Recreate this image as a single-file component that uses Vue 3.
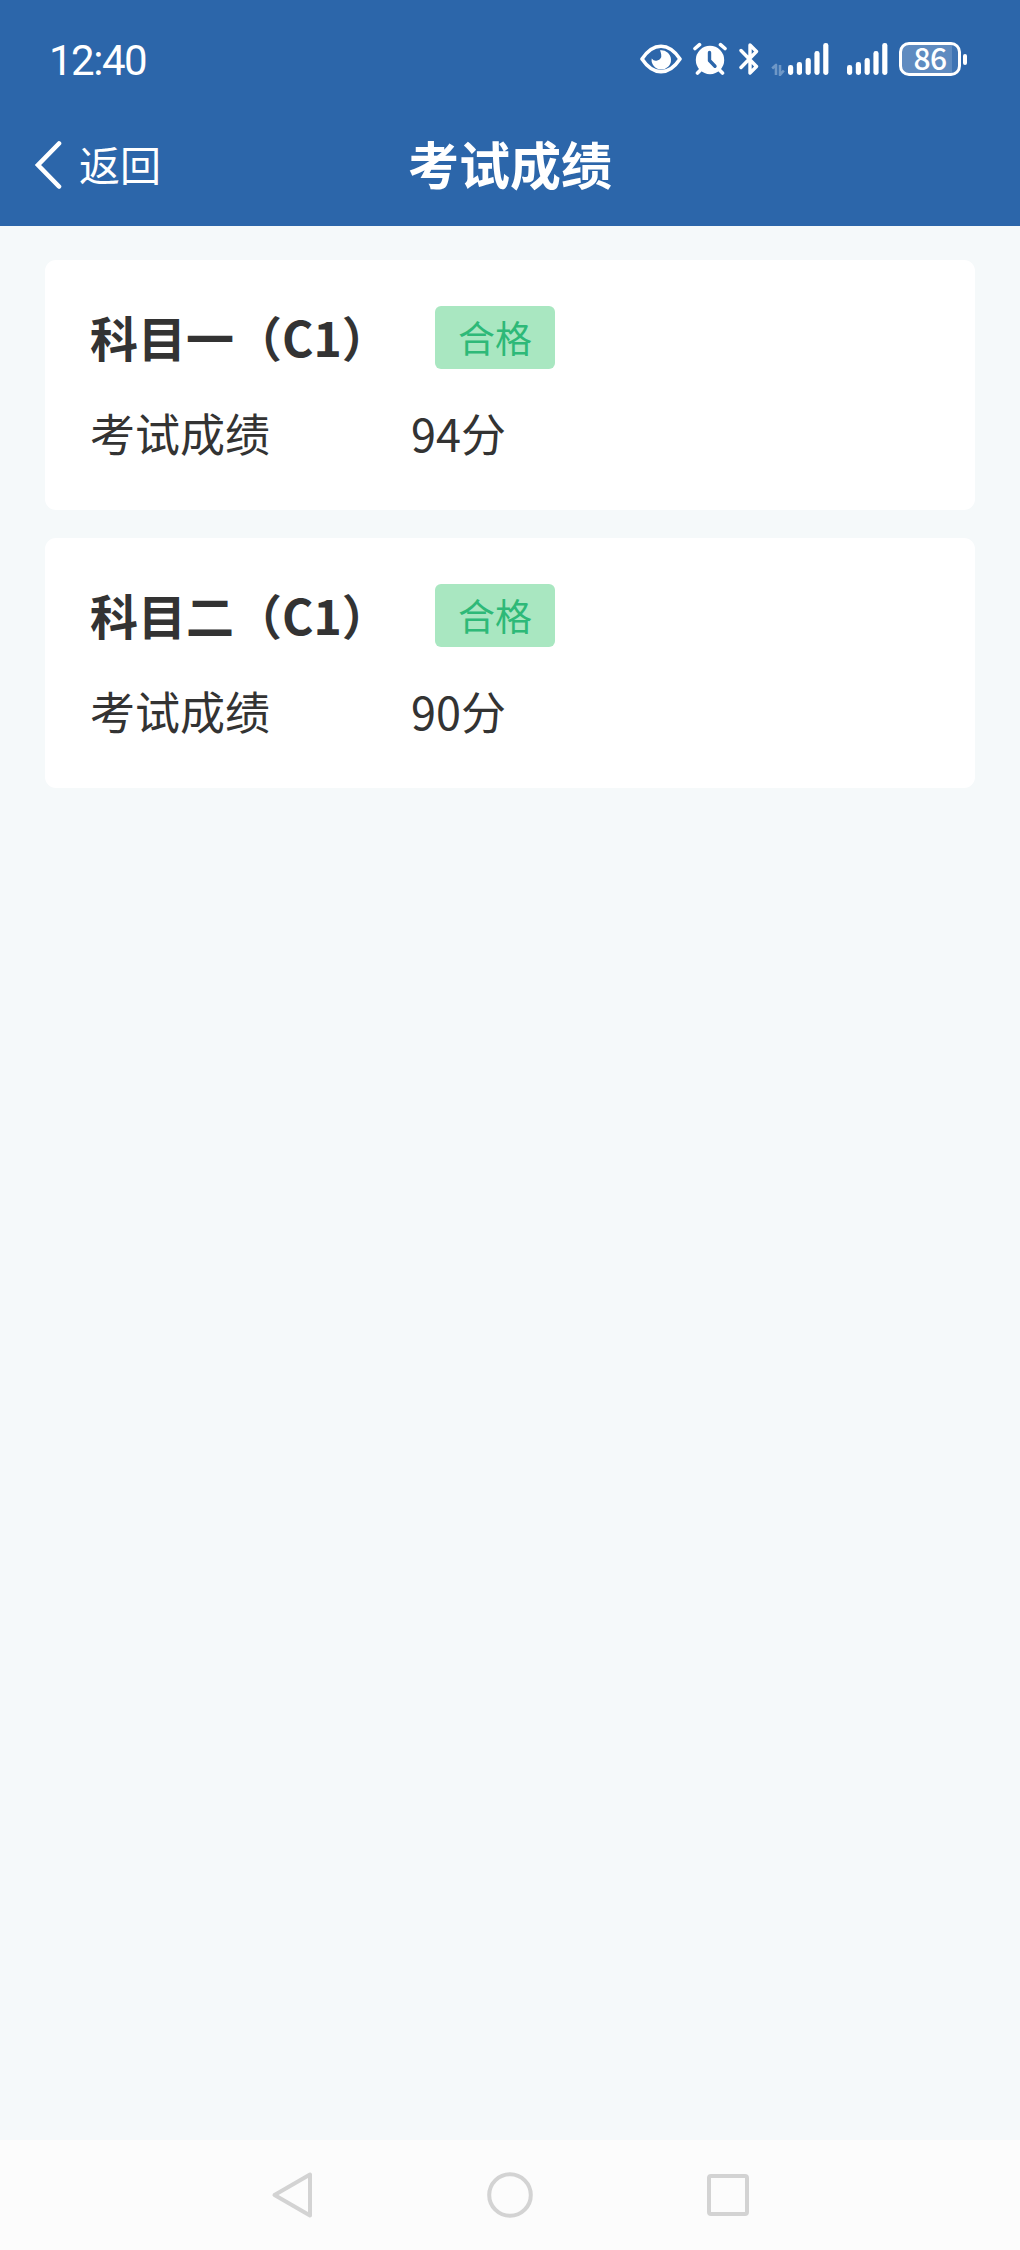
<template>
  <div class="page">
    <header class="header">
      <div class="status-bar">
        <span class="time">12:40</span>
        <div class="status-icons">
          <svg class="eye" width="42" height="34" viewBox="0 0 42 34">
            <path d="M2 17C8 8 14 4.300 21 4.300S34 8 40 17C34 26 28 29.700 21 29.700S8 26 2 17Z" fill="none" stroke="#fff" stroke-width="3.600" stroke-linejoin="round" />
            <path d="M20 8.300a9.700 9.700 0 1 1-8.300 8.200q2.200 3 5.500 2.100q4.800-1.400 4-6.100q-.3-2.300-1.200-4.200Z" fill="#fff" />
          </svg>
          <svg class="alarm" width="34" height="34" viewBox="0 0 34 34">
            <circle cx="17" cy="18" r="14.200" fill="#fff" />
            <path d="M2 6.500L6.500 2.600M32 6.500L27.500 2.600M7 28.500L4.500 31M27 28.500L29.500 31" stroke="#fff" stroke-width="3.600" stroke-linecap="round" />
            <path d="M16.500 10.500V18.500L22 24.200" fill="none" stroke="#2c66aa" stroke-width="3.400" stroke-linecap="round" stroke-linejoin="round" />
          </svg>
          <svg class="bluetooth" width="20" height="34" viewBox="0 0 20 34">
            <path d="M2 8.500L17.500 24.500L11 31V3L17.500 9.500L2 25.500" fill="none" stroke="#fff" stroke-width="3.400" stroke-linecap="round" stroke-linejoin="round" />
          </svg>
          <svg class="data" width="14" height="34" viewBox="0 0 14 34">
            <path d="M1.200 26.500L5 23V33M9 23V33L12.800 28.500" fill="none" stroke="#6f98c7" stroke-width="2.600" stroke-linejoin="round" />
          </svg>
          <svg v-for="n in 2" :key="n" class="signal" width="41" height="34" viewBox="0 0 41 34">
            <rect v-for="(bar, i) in bars" :key="i" :x="bar.x" :y="bar.y" width="5.200" :height="33 - bar.y" rx="2.400" fill="#fff" />
          </svg>
          <div class="battery">
            <span class="level">86</span>
          </div>
          <span class="battery-tip"></span>
        </div>
      </div>
      <div class="title-bar">
        <div class="back">
          <svg width="28" height="50" viewBox="0 0 28 50">
            <path d="M25 3.500L4 25L25 46.500" fill="none" stroke="#fff" stroke-width="4.600" stroke-linecap="round" />
          </svg>
          <span class="back-text">返回</span>
        </div>
        <h1 class="title">考试成绩</h1>
      </div>
    </header>

    <main class="list">
      <section v-for="exam in exams" :key="exam.subject" class="card">
        <div class="row">
          <h2 class="subject">{{ exam.subject }}</h2>
          <span class="badge">{{ exam.status }}</span>
        </div>
        <div class="row score-row">
          <span class="label">考试成绩</span>
          <span class="score">{{ exam.score }}分</span>
        </div>
      </section>
    </main>

    <nav class="system-nav">
      <svg width="46" height="50" viewBox="0 0 46 50">
        <path d="M41 4.500V45.500L5.500 25Z" fill="none" stroke="#d3d3d3" stroke-width="4" stroke-linejoin="round" />
      </svg>
      <svg width="50" height="50" viewBox="0 0 50 50">
        <circle cx="25" cy="25" r="20.800" fill="none" stroke="#d3d3d3" stroke-width="4" />
      </svg>
      <svg width="46" height="50" viewBox="0 0 46 50">
        <rect x="4" y="6" width="38" height="38" rx="2" fill="none" stroke="#d3d3d3" stroke-width="4" />
      </svg>
    </nav>
  </div>
</template>

<script setup>
import { ref } from 'vue'

const exams = ref([
  { subject: '科目一（C1）', status: '合格', score: 94 },
  { subject: '科目二（C1）', status: '合格', score: 90 }
])

const bars = [
  { x: 0, y: 23 },
  { x: 8.8, y: 20 },
  { x: 17.6, y: 16 },
  { x: 26.4, y: 9 },
  { x: 35.2, y: 1 }
]
</script>

<style>
body {
  margin: 0;
  background-color: #f5f9fa;
}
</style>

<style scoped>
.page {
  display: flex;
  flex-direction: column;
  width: 1020px;
  height: 2250px;
  background-color: #f5f9fa;
  color: #333;
  font-family: "Noto Sans CJK SC", sans-serif;
}

svg {
  display: block;
}

.header {
  height: 226px;
  background-color: #2c66aa;
  color: #fff;
}

.status-bar {
  display: flex;
  align-items: center;
  justify-content: space-between;
  box-sizing: border-box;
  height: 104px;
  padding: 14px 53px 0 49px;
}

.time {
  padding-top: 3px;
  font-family: Roboto, sans-serif;
  font-size: 42px;
  letter-spacing: -1.5px;
  line-height: 50px;
}

.status-icons {
  display: flex;
  align-items: center;
}

.alarm {
  margin-left: 11px;
}

.bluetooth {
  margin-left: 12px;
}

.data {
  margin-left: 12px;
}

.signal {
  margin-left: 3px;
}

.signal + .signal {
  margin-left: 18px;
}

.battery {
  display: flex;
  align-items: center;
  justify-content: center;
  box-sizing: border-box;
  width: 62px;
  height: 34px;
  margin-left: 11px;
  border: 3px solid #fff;
  border-radius: 10px;
  background: linear-gradient(to right, #5f8bc0 50px, #3f74b3 50px);
}

.level {
  padding-bottom: 4px;
  font-size: 30px;
  font-weight: 500;
  letter-spacing: -0.5px;
  line-height: 28px;
}

.battery-tip {
  width: 4px;
  height: 11px;
  margin-left: 2px;
  border-radius: 2px;
  background-color: #fff;
}

.title-bar {
  display: grid;
  grid-template-columns: 1fr auto 1fr;
  align-items: center;
  height: 122px;
}

.back {
  display: flex;
  align-items: center;
  padding-left: 34px;
}

.back-text {
  margin-left: 17px;
  padding-bottom: 5px;
  font-size: 41px;
  line-height: 60px;
}

.title {
  margin: 0;
  padding-bottom: 4px;
  font-size: 51px;
  font-weight: 700;
  line-height: 70px;
}

.list {
  display: flex;
  flex: 1;
  flex-direction: column;
  gap: 28px;
  padding: 34px 45px;
}

.card {
  box-sizing: border-box;
  height: 250px;
  padding: 46px 45px;
  border-radius: 11px;
  background-color: #fff;
}

.row {
  display: flex;
  align-items: center;
}

.subject {
  width: 345px;
  margin: 0;
  padding-bottom: 3px;
  font-size: 48px;
  font-weight: 700;
  line-height: 60px;
}

.badge {
  width: 120px;
  height: 63px;
  border-radius: 6px;
  background-color: #a9e7c1;
  color: #2eb978;
  font-size: 37px;
  line-height: 63px;
  text-align: center;
}

.score-row {
  margin-top: 31px;
  font-size: 45px;
  line-height: 66px;
}

.label {
  width: 321px;
}

.system-nav {
  display: flex;
  align-items: center;
  justify-content: center;
  gap: 170px;
  box-sizing: border-box;
  height: 110px;
  background-color: #fcfcfc;
}
</style>
